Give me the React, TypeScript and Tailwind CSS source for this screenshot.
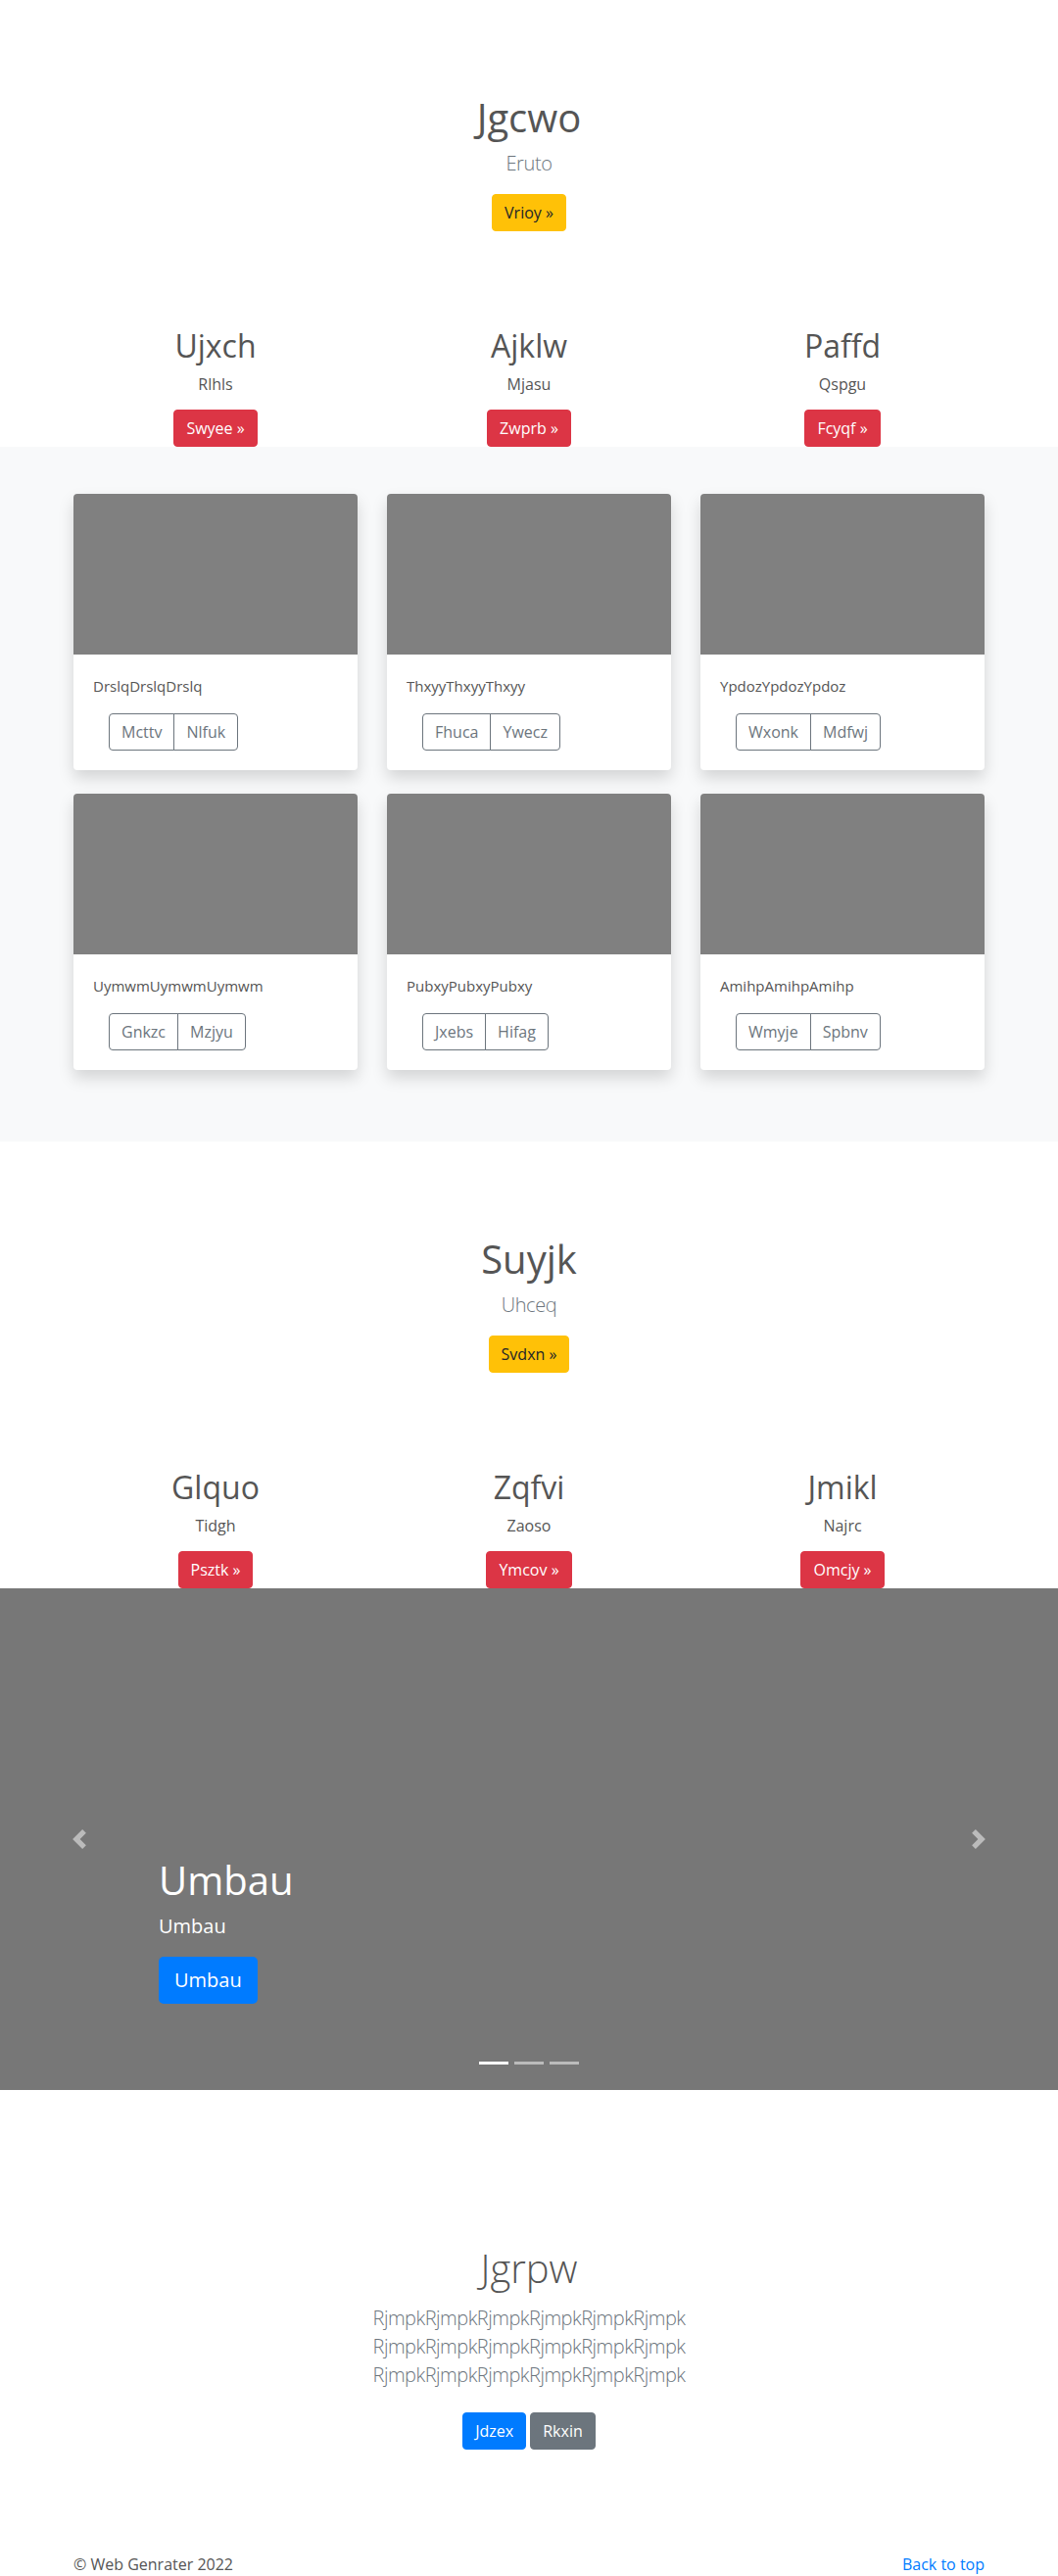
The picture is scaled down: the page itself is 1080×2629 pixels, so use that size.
import React from 'react';

interface Col {
  title: string;
  text: string;
  cta: string;
}

interface Card {
  text: string;
  a: string;
  b: string;
}

const topCols: Col[] = [
  { title: 'Ujxch', text: 'Rlhls', cta: 'Swyee' },
  { title: 'Ajklw', text: 'Mjasu', cta: 'Zwprb' },
  { title: 'Paffd', text: 'Qspgu', cta: 'Fcyqf' },
];

const bottomCols: Col[] = [
  { title: 'Glquo', text: 'Tidgh', cta: 'Psztk' },
  { title: 'Zqfvi', text: 'Zaoso', cta: 'Ymcov' },
  { title: 'Jmikl', text: 'Najrc', cta: 'Omcjy' },
];

const cards: Card[] = [
  { text: 'DrslqDrslqDrslq', a: 'Mcttv', b: 'Nlfuk' },
  { text: 'ThxyyThxyyThxyy', a: 'Fhuca', b: 'Ywecz' },
  { text: 'YpdozYpdozYpdoz', a: 'Wxonk', b: 'Mdfwj' },
  { text: 'UymwmUymwmUymwm', a: 'Gnkzc', b: 'Mzjyu' },
  { text: 'PubxyPubxyPubxy', a: 'Jxebs', b: 'Hifag' },
  { text: 'AmihpAmihpAmihp', a: 'Wmyje', b: 'Spbnv' },
];

// hero block: centered title + yellow button, then three red-button columns
function Hero({ title, lead, cta, cols }: { title: string; lead: string; cta: string; cols: Col[] }) {
  return (
    <section>
      <div className="pt-24 text-center">
        <h1 className="text-[40px] leading-[48px] font-medium text-[#555]">{title}</h1>
        <p className="mt-2 text-xl leading-[30px] font-light tracking-[-0.02em] text-[#6c757d]">{lead}</p>
        <a href="#" className="mt-4 inline-block rounded border border-[#ffc107] bg-[#ffc107] px-3 py-1.5 text-base leading-6 text-[#212529]">
          {cta} »
        </a>
      </div>
      <div className="mx-auto grid w-[960px] grid-cols-3 pt-[98px] text-center">
        {cols.map((c) => (
          <div key={c.title} className="flex flex-col items-center">
            <h2 className="text-[32px] leading-[38px] font-medium text-[#555]">{c.title}</h2>
            <p className="mt-2 text-base leading-6 text-[#555]">{c.text}</p>
            <a href="#" className="mt-[14px] inline-block rounded border border-[#dc3545] bg-[#dc3545] px-3 py-1.5 text-base leading-6 text-white">
              {c.cta} »
            </a>
          </div>
        ))}
      </div>
    </section>
  );
}

function Chevron({ dir }: { dir: 'left' | 'right' }) {
  return (
    <svg width="20" height="20" viewBox="0 0 8 8" fill="#fff">
      {dir === 'left' ? (
        <path d="M5.25 0l-4 4 4 4 1.5-1.5L4.25 4l2.5-2.5L5.25 0z" />
      ) : (
        <path d="M2.75 0l-1.5 1.5L3.75 4l-2.5 2.5L2.75 8l4-4-4-4z" />
      )}
    </svg>
  );
}

export default function App() {
  return (
    <div className="bg-white font-['Open_Sans',sans-serif] text-[#555]">
      <Hero title="Jgcwo" lead="Eruto" cta="Vrioy" cols={topCols} />

      {/* Album cards */}
      <section className="bg-[#f8f9fa] pt-12 pb-[73px]">
        <div className="mx-auto grid w-[930px] grid-cols-3 gap-x-[30px] gap-y-6">
          {cards.map((c) => (
            <div key={c.text} className="overflow-hidden rounded bg-white shadow-[0_8px_16px_rgba(0,0,0,0.15)]">
              <div className="h-[164px] bg-[#808080]" />
              <div className="p-5">
                <p className="text-[15px] leading-6 text-[#555]">{c.text}</p>
                <div className="ml-4 mt-4 inline-flex">
                  <button className="rounded-l border border-[#6c757d] px-3 py-1.5 text-base leading-6 text-[#6c757d]">{c.a}</button>
                  <button className="-ml-px rounded-r border border-[#6c757d] px-3 py-1.5 text-base leading-6 text-[#6c757d]">{c.b}</button>
                </div>
              </div>
            </div>
          ))}
        </div>
      </section>

      <Hero title="Suyjk" lead="Uhceq" cta="Svdxn" cols={bottomCols} />

      {/* Carousel */}
      <section className="relative h-[512px] bg-[#777]">
        <div className="absolute inset-y-0 left-0 flex w-[15%] items-center justify-center opacity-50">
          <Chevron dir="left" />
        </div>
        <div className="absolute inset-y-0 right-0 flex w-[15%] items-center justify-center opacity-50">
          <Chevron dir="right" />
        </div>
        <div className="absolute left-[15%] right-[15%] bottom-[88px] text-white">
          <h1 className="text-[40px] leading-[48px] font-medium">Umbau</h1>
          <p className="mt-2 text-xl leading-[30px]">Umbau</p>
          <a href="#" className="mt-4 inline-block rounded-[5px] bg-[#007bff] px-4 py-2 text-xl leading-8 text-white">Umbau</a>
        </div>
        <div className="absolute inset-x-0 bottom-[26px] flex justify-center">
          <span className="mx-[3px] h-[3px] w-[30px] bg-white" />
          <span className="mx-[3px] h-[3px] w-[30px] bg-white/50" />
          <span className="mx-[3px] h-[3px] w-[30px] bg-white/50" />
        </div>
      </section>

      {/* Closing jumbotron */}
      <section className="pt-[158px] text-center">
        <h1 className="text-[40px] leading-[48px] font-light text-[#555]">Jgrpw</h1>
        <div className="mt-3 text-xl leading-[29px] font-light tracking-[-0.025em] text-[#6c757d]">
          <p>RjmpkRjmpkRjmpkRjmpkRjmpkRjmpk</p>
          <p>RjmpkRjmpkRjmpkRjmpkRjmpkRjmpk</p>
          <p>RjmpkRjmpkRjmpkRjmpkRjmpkRjmpk</p>
        </div>
        <div className="mt-6 flex justify-center gap-1">
          <a href="#" className="rounded border border-[#007bff] bg-[#007bff] px-3 py-1.5 text-base leading-6 text-white">Jdzex</a>
          <a href="#" className="rounded border border-[#6c757d] bg-[#6c757d] px-3 py-1.5 text-base leading-6 text-white">Rkxin</a>
        </div>
      </section>

      <footer className="mx-auto flex w-[930px] justify-between pt-[105px] text-base leading-6">
        <p className="text-[#555]">© Web Genrater 2022</p>
        <a href="#" className="text-[#007bff]">Back to top</a>
      </footer>
    </div>
  );
}
